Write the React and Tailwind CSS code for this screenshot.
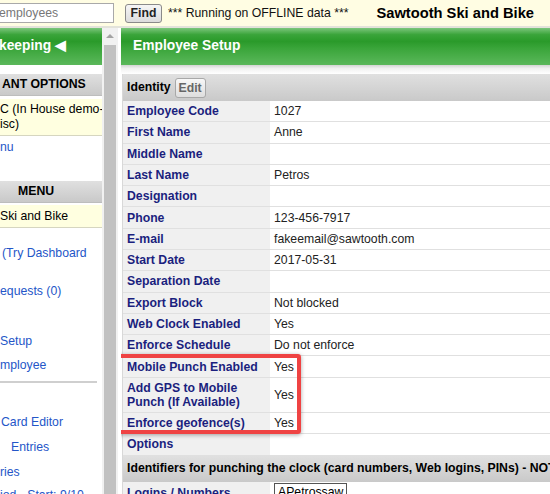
const ROWS = [
  ["Employee Code", "1027"],
  ["First Name", "Anne"],
  ["Middle Name", ""],
  ["Last Name", "Petros"],
  ["Designation", ""],
  ["Phone", "123-456-7917"],
  ["E-mail", "fakeemail@sawtooth.com"],
  ["Start Date", "2017-05-31"],
  ["Separation Date", ""],
  ["Export Block", "Not blocked"],
  ["Web Clock Enabled", "Yes"],
  ["Enforce Schedule", "Do not enforce"],
  ["Mobile Punch Enabled", "Yes"],
  ["Add GPS to Mobile Punch (If Available)", "Yes", true],
  ["Enforce geofence(s)", "Yes"],
  ["Options", ""],
];

const GREEN =
  "bg-[linear-gradient(to_bottom,#7cc67c_0%,#3aa43a_18%,#2a9a2a_36%,#3aa53a_55%,#5bb85b_100%)]";
const GRAY = "bg-[linear-gradient(to_bottom,#e0e0e0,#c9c9c9)]";

function SideLink({ children, className = "" }) {
  return (
    <div className={"leading-[15px] h-[15px] whitespace-nowrap text-[#2456c8] " + className}>
      {children}
    </div>
  );
}

function Row({ label, value, tall }) {
  return (
    <div className="flex border-b border-[#e0e0e0]">
      <div className="w-[147px] shrink-0 bg-[#f0f0f0] pl-[4px] pr-[6px] py-[3.15px] leading-[14px] font-bold text-[#1b1f7e]">
        {tall ? (
          <>
            Add GPS to Mobile
            <br />
            Punch (If Available)
          </>
        ) : (
          label
        )}
      </div>
      <div className="flex-1 pl-[4px] py-[3.15px] leading-[14px] text-[#222] flex items-center">
        {value}
      </div>
    </div>
  );
}

export default function App() {
  return (
    <div className="w-[550px] h-[494px] overflow-hidden bg-white font-['Liberation_Sans',Arial,sans-serif] text-[12.25px] text-black">
      {/* top bar */}
      <div className="h-[28px] bg-[#fffde3] border-b-2 border-[#e3e3da] flex items-center whitespace-nowrap">
        <div className="ml-[-10px] w-[124px] h-[20px] border border-[#a9a9a9] bg-white pl-[8px] leading-[18px] text-[#777]">
          employees
        </div>
        <div className="ml-[11px] w-[37px] h-[19px] border border-[#8a8a8a] rounded-[3px] bg-[linear-gradient(to_bottom,#f6f6f6,#dcdcdc)] flex items-center justify-center font-bold text-[#222]">
          Find
        </div>
        <div className="ml-[6px] text-[#111]">*** Running on OFFLINE data ***</div>
        <div className="ml-[28px] font-bold text-[14.7px]">Sawtooth Ski and Bike</div>
      </div>

      <div className="flex h-[466px]">
        {/* sidebar */}
        <div className="w-[102px] shrink-0 overflow-hidden flex flex-col">
          <div className={"h-[37px] shrink-0 flex items-center text-white font-bold text-[13.8px] whitespace-nowrap -ml-[1px] " + GREEN}>
            keeping ◀
          </div>
          <div className={"mt-[9px] h-[22px] shrink-0 flex items-center pl-[2px] font-bold text-[12.25px] whitespace-nowrap border-b border-[#bdbdbd] " + GRAY}>
            ANT OPTIONS
          </div>
          <div className="mt-[3px] bg-[#ffffe0] border-b border-[#d6d6c0] py-[3px] leading-[15px] whitespace-nowrap">
            C (In House demo-
            <br />
            isc)
          </div>
          <SideLink className="mt-[3.5px]">nu</SideLink>
          <div className={"mt-[26.5px] h-[22px] shrink-0 flex items-center pl-[18px] font-bold text-[12.25px] whitespace-nowrap border-b border-[#bdbdbd] " + GRAY}>
            MENU
          </div>
          <div className="mt-[2px] h-[23px] shrink-0 bg-[#ffffe0] border-b border-[#d6d6c0] flex items-center whitespace-nowrap">
            Ski and Bike
          </div>
          <SideLink className="mt-[17.5px] pl-[2px]">(Try Dashboard</SideLink>
          <SideLink className="mt-[23px]">equests (0)</SideLink>
          <SideLink className="mt-[35px]">Setup</SideLink>
          <SideLink className="mt-[9px]">mployee</SideLink>
          <div className="mt-[8.5px] h-[2px] w-[97px] bg-[#cfcfcf] shrink-0" />
          <SideLink className="mt-[31.5px] pl-[1px]">Card Editor</SideLink>
          <SideLink className="mt-[10px] pl-[11px]">Entries</SideLink>
          <SideLink className="mt-[10px]">ries</SideLink>
          <SideLink className="mt-[8px]">iod - Start: 9/10</SideLink>
        </div>

        {/* scrollbar */}
        <div className="w-[16px] shrink-0 bg-[#f1f1f1] flex flex-col items-center pt-[6px]">
          <div className="w-0 h-0 border-l-[4px] border-r-[4px] border-b-[4px] border-l-transparent border-r-transparent border-b-[#a3a3a3]" />
          <div className="mt-[7px] w-[12px] flex-1 bg-[#c1c1c1]" />
        </div>

        {/* main */}
        <div className="ml-[3px] flex-1 flex flex-col overflow-hidden">
          <div className={"h-[37px] shrink-0 flex items-center pl-[12px] text-white font-bold text-[13.8px] " + GREEN}>
            Employee Setup
          </div>
          <div className="h-[9px] shrink-0 bg-[linear-gradient(to_bottom,#d4d4d4,#f2f2f2_40%,#ffffff)]" />
          <div className="ml-[1px] border-l border-[#d8d8d8]">
            <div className={"h-[27px] flex items-center pl-[4px] gap-[4px] font-bold " + GRAY}>
              <span>Identity</span>
              <span className="h-[20px] px-[3px] border border-[#a8a8a8] rounded-[3px] bg-[linear-gradient(to_bottom,#f7f7f7,#dedede)] text-[#666] leading-[18px]">
                Edit
              </span>
            </div>
            <div className="relative">
              {ROWS.map(([l, v, t]) => (
                <Row key={l} label={l} value={v} tall={t} />
              ))}
              <div className="absolute left-[-7px] top-[253px] w-[185px] h-[80px] border-[4px] border-[#ef4343] rounded-[3px] shadow-[0_1px_4px_rgba(0,0,0,0.35)] pointer-events-none" />
            </div>
            <div className={"h-[26px] flex items-center pl-[4px] font-bold whitespace-nowrap " + GRAY}>
              Identifiers for punching the clock (card numbers, Web logins, PINs) - NOTE
            </div>
            <div className="flex">
              <div className="w-[147px] shrink-0 bg-[#f0f0f0] pl-[4px] pt-[4px] leading-[14px] font-bold text-[#1b1f7e] h-[20px]">
                Logins / Numbers
              </div>
              <div className="pl-[4px] pt-[1px]">
                <div className="w-[73px] h-[18px] border border-[#555] pl-[3px] leading-[16px] overflow-hidden whitespace-nowrap">
                  APetrossaw
                </div>
              </div>
            </div>
          </div>
        </div>
      </div>
    </div>
  );
}
